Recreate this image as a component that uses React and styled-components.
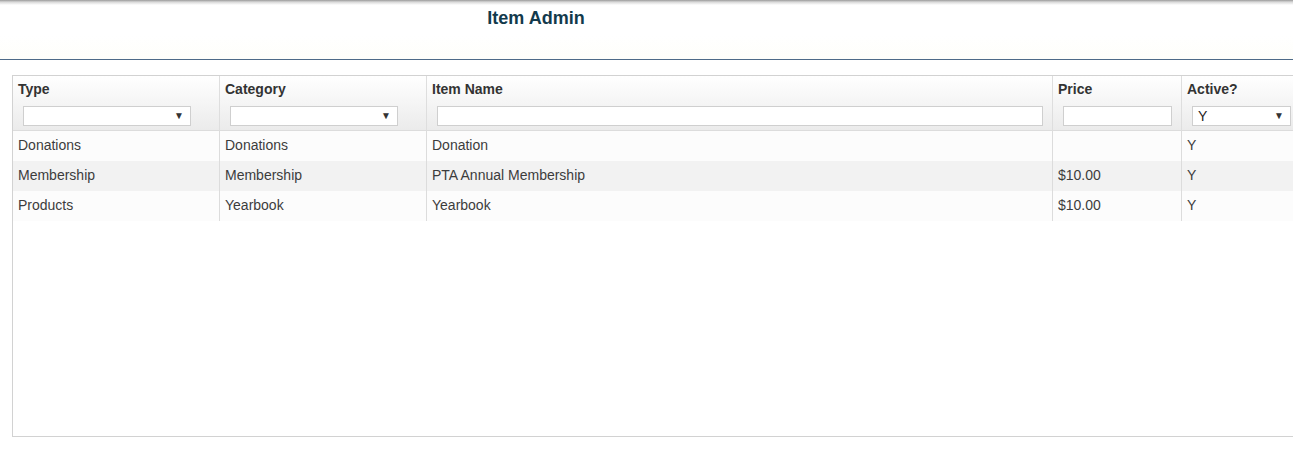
import React from "react";
import styled, { createGlobalStyle } from "styled-components";

const GlobalStyle = createGlobalStyle`
  html, body {
    margin: 0;
    padding: 0;
    background: #ffffff;
    overflow: hidden;
  }
  body {
    font-family: "Liberation Sans", Arial, sans-serif;
    color: #333333;
  }
`;

const Page = styled.div`
  width: 1293px;
  height: 450px;
  overflow: hidden;
  background: #ffffff;
`;

const TopBar = styled.header`
  height: 59px;
  border-bottom: 1px solid #4d6a88;
  background: linear-gradient(
    to bottom,
    #9a9a9a 0px,
    #d8d8d8 2px,
    #ffffff 5px,
    #ffffff 60%,
    #fefefa 100%
  );
`;

const TitleBox = styled.div`
  width: 1072px;
  text-align: center;
  padding-top: 7px;
`;

const Title = styled.h1`
  margin: 0;
  font-size: 18px;
  line-height: 22px;
  font-weight: 700;
  color: #123a4c;
`;

const Grid = styled.div`
  margin: 15px 0 0 12px;
  width: 1320px;
  height: 360px;
  border: 1px solid #d2d2d2;
  background: #ffffff;
`;

const cols = [
  { key: "type", label: "Type", width: 207 },
  { key: "category", label: "Category", width: 207 },
  { key: "name", label: "Item Name", width: 626 },
  { key: "price", label: "Price", width: 129 },
  { key: "active", label: "Active?", width: 140 },
];

const HeaderRow = styled.div`
  display: flex;
  height: 54px;
  border-bottom: 1px solid #dcdcdc;
  background: linear-gradient(to bottom, #ffffff 0%, #f6f6f6 45%, #ebebeb 100%);
`;

const HeaderCell = styled.div`
  box-sizing: border-box;
  width: ${(p) => p.$w}px;
  flex: none;
  border-right: 1px solid #dedede;
  padding: 5px 0 0 0;
  display: flex;
  flex-direction: column;
`;

const HeaderLabel = styled.div`
  padding-left: 5px;
  font-size: 14px;
  line-height: 16px;
  font-weight: 700;
  color: #333333;
`;

const FilterRow = styled.div`
  margin-top: 9px;
  padding: 0 9px 0 10px;
`;

const FilterSelect = styled.div`
  box-sizing: border-box;
  width: ${(p) => p.$w}px;
  height: 20px;
  border: 1px solid #cfcfcf;
  background: #ffffff;
  display: flex;
  align-items: center;
  justify-content: space-between;
  padding: 0 6px 0 5px;
  font-size: 14px;
  color: #222222;
`;

const Arrow = styled.span`
  font-size: 10px;
  line-height: 10px;
  color: #333333;
`;

const FilterInput = styled.input`
  box-sizing: border-box;
  display: block;
  width: 100%;
  height: 20px;
  margin: 0;
  border: 1px solid #cfcfcf;
  background: #ffffff;
  padding: 0 4px;
  font-family: "Liberation Sans", Arial, sans-serif;
  font-size: 13px;
  outline: none;
`;

const Row = styled.div`
  display: flex;
  height: 30px;
  background: ${(p) => (p.$alt ? "#f2f2f2" : "#fcfcfc")};
`;

const Cell = styled.div`
  box-sizing: border-box;
  width: ${(p) => p.$w}px;
  flex: none;
  border-right: 1px solid #dcdcdc;
  padding: 0 0 2px 5px;
  display: flex;
  align-items: center;
  font-size: 14px;
  color: #3c3c3c;
  white-space: nowrap;
`;

const rows = [
  { type: "Donations", category: "Donations", name: "Donation", price: "", active: "Y" },
  { type: "Membership", category: "Membership", name: "PTA Annual Membership", price: "$10.00", active: "Y" },
  { type: "Products", category: "Yearbook", name: "Yearbook", price: "$10.00", active: "Y" },
];

const filters = {
  type: { kind: "select", width: 168, value: "" },
  category: { kind: "select", width: 168, value: "" },
  name: { kind: "input" },
  price: { kind: "input" },
  active: { kind: "select", width: 99, value: "Y" },
};

const Filter = ({ spec }) =>
  spec.kind === "select" ? (
    <FilterSelect $w={spec.width}>
      <span>{spec.value}</span>
      <Arrow>▼</Arrow>
    </FilterSelect>
  ) : (
    <FilterInput type="text" />
  );

const App = () => (
  <Page>
    <GlobalStyle />
    <TopBar>
      <TitleBox>
        <Title>Item Admin</Title>
      </TitleBox>
    </TopBar>
    <Grid>
      <HeaderRow>
        {cols.map((c) => (
          <HeaderCell key={c.key} $w={c.width}>
            <HeaderLabel>{c.label}</HeaderLabel>
            <FilterRow>
              <Filter spec={filters[c.key]} />
            </FilterRow>
          </HeaderCell>
        ))}
      </HeaderRow>
      {rows.map((r, i) => (
        <Row key={r.name} $alt={i % 2 === 1}>
          {cols.map((c) => (
            <Cell key={c.key} $w={c.width}>
              {r[c.key]}
            </Cell>
          ))}
        </Row>
      ))}
    </Grid>
  </Page>
);

export default App;
